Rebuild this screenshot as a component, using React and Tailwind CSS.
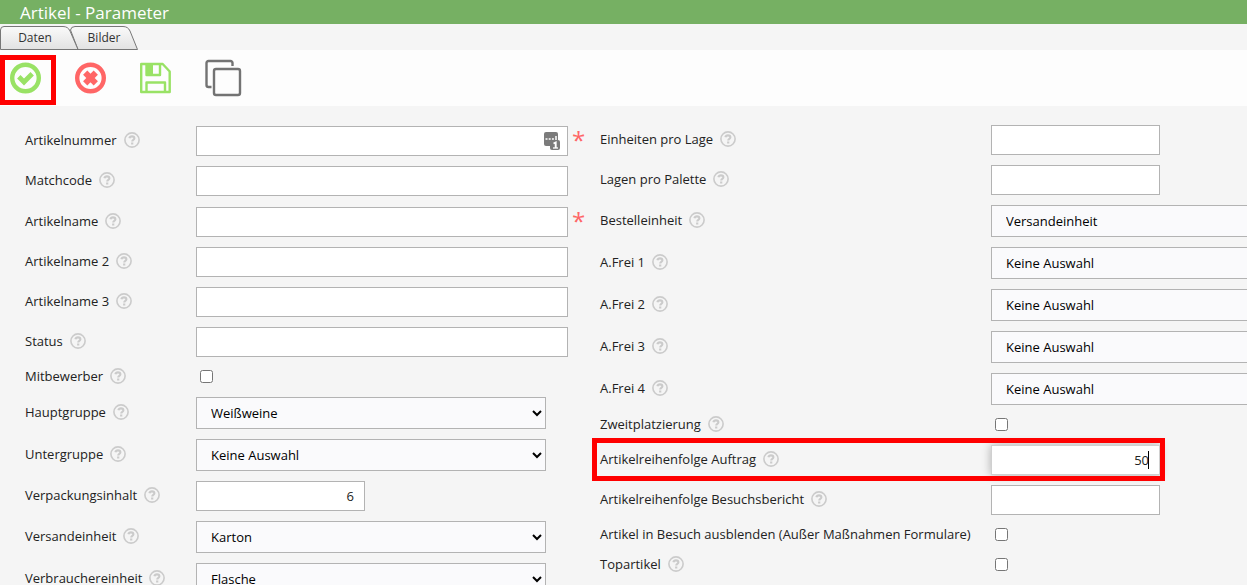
import React from 'react';

const leftFields = [
  { id: 'artikelnummer', label: 'Artikelnummer', type: 'text', required: true, badge: true },
  { id: 'matchcode', label: 'Matchcode', type: 'text' },
  { id: 'artikelname', label: 'Artikelname', type: 'text', required: true },
  { id: 'artikelname2', label: 'Artikelname 2', type: 'text' },
  { id: 'artikelname3', label: 'Artikelname 3', type: 'text' },
  { id: 'status', label: 'Status', type: 'text' },
  { id: 'mitbewerber', label: 'Mitbewerber', type: 'checkbox' },
  { id: 'hauptgruppe', label: 'Hauptgruppe', type: 'select', value: 'Weißweine' },
  { id: 'untergruppe', label: 'Untergruppe', type: 'select', value: 'Keine Auswahl' },
  { id: 'verpackungsinhalt', label: 'Verpackungsinhalt', type: 'number', value: '6' },
  { id: 'versandeinheit', label: 'Versandeinheit', type: 'select', value: 'Karton' },
  { id: 'verbrauchereinheit', label: 'Verbrauchereinheit', type: 'select', value: 'Flasche' },
];

const rightFields = [
  { id: 'einheitenLage', label: 'Einheiten pro Lage', type: 'number' },
  { id: 'lagenPalette', label: 'Lagen pro Palette', type: 'number' },
  { id: 'bestelleinheit', label: 'Bestelleinheit', type: 'select', value: 'Versandeinheit' },
  { id: 'frei1', label: 'A.Frei 1', type: 'select', value: 'Keine Auswahl' },
  { id: 'frei2', label: 'A.Frei 2', type: 'select', value: 'Keine Auswahl' },
  { id: 'frei3', label: 'A.Frei 3', type: 'select', value: 'Keine Auswahl' },
  { id: 'frei4', label: 'A.Frei 4', type: 'select', value: 'Keine Auswahl' },
  { id: 'zweitplatzierung', label: 'Zweitplatzierung', type: 'checkbox' },
  { id: 'folgeAuftrag', label: 'Artikelreihenfolge Auftrag', type: 'number', value: '50', marked: true },
  { id: 'folgeBesuch', label: 'Artikelreihenfolge Besuchsbericht', type: 'number' },
  { id: 'ausblenden', label: 'Artikel in Besuch ausblenden (Außer Maßnahmen Formulare)', type: 'checkbox', noHelp: true },
  { id: 'topartikel', label: 'Topartikel', type: 'checkbox' },
];

function HelpIcon() {
  return (
    <svg viewBox="0 0 16 16" className="w-4 h-4 shrink-0" fill="none" stroke="#cbcbcb" aria-hidden="true">
      <circle cx="8" cy="8" r="7.1" strokeWidth="1.6" />
      <path d="M5.4 6.300C5.700 5 6.700 4.400 8 4.400c1.500 0 2.400.8 2.400 1.900 0 1.600-2.200 1.400-2.200 3.100" strokeWidth="2.100" />
      <path d="M7.100 11.500h2.200" strokeWidth="2" />
    </svg>
  );
}

function Field({ field }) {
  const { id, type, value, marked, badge } = field;
  if (type === 'checkbox') {
    return <input id={id} type="checkbox" className="w-[13px] h-[13px] ml-1 mb-[2px]" />;
  }
  if (type === 'select') {
    return (
      <select
        id={id}
        defaultValue={value}
        className="w-[350px] h-8 shrink-0 pl-[10px] bg-[#fafafc] border border-[#b3b3b3] text-black"
      >
        <option>{value}</option>
      </select>
    );
  }
  if (type === 'number') {
    return (
      <div className="relative w-[169px]">
        <input
          id={id}
          type="text"
          inputMode="numeric"
          defaultValue={value}
          className={`block w-full h-[30px] px-[10px] bg-white border text-right outline-none ${
            marked ? 'border-[#d0d0d0] shadow-[0_0_10px_rgba(0,0,0,0.3)] caret-transparent' : 'border-[#b3b3b3]'
          }`}
        />
        {marked && <span className="absolute right-[11px] top-[6px] w-px h-[18px] bg-black" />}
      </div>
    );
  }
  return (
    <div className="relative w-[372px]">
      <input id={id} type="text" className="block w-full h-[30px] px-[10px] bg-white border border-[#b3b3b3] outline-none" />
      {badge && (
        <svg viewBox="0 0 17 19" className="absolute right-[7px] top-[6px] w-[17px] h-[19px]" aria-hidden="true">
          <rect x="0" y="0" width="14" height="14" rx="2" fill="#7b7b7b" />
          <path d="M1.500 7h2M4.700 7h2M7.900 7h2M12 4v4" stroke="#fff" strokeWidth="1.500" />
          <rect x="6" y="8" width="10" height="10" rx="2" fill="#7b7b7b" />
          <path d="M9.500 11.500l2.200-1V16" fill="none" stroke="#fff" strokeWidth="1.900" />
          <path d="M9 16h5" stroke="#fff" strokeWidth="1.300" />
        </svg>
      )}
    </div>
  );
}

function FieldRow({ field, labelClass }) {
  const height = field.type === 'checkbox' ? 'h-5' : field.type === 'select' ? 'h-8' : field.required ? 'h-[31px] pt-px' : 'h-[30px]';
  return (
    <div className={`relative flex items-center ${height}`}>
      <div className={`flex items-start gap-[7px] shrink-0 pb-[2px] ${labelClass}`}>
        <label htmlFor={field.id} className="whitespace-nowrap leading-4">{field.label}</label>
        {!field.noHelp && <HelpIcon />}
      </div>
      <Field field={field} />
      {field.required && <span className="self-start pl-1 pt-[2px] text-2xl leading-6 text-[#ff6666]">*</span>}
      {field.marked && (
        <div className="absolute -left-2 -top-[7px] -bottom-[6px] w-[573px] border-[5px] border-[#ff0000] pointer-events-none" />
      )}
    </div>
  );
}

function Tabs() {
  return (
    <nav className="relative flex h-[26px] text-xs text-[#333]">
      <svg viewBox="0 0 140 26" className="absolute left-0 top-0 w-[140px] h-[26px]" aria-hidden="true">
        <defs>
          <linearGradient id="tab" x1="0" y1="0" x2="0" y2="1">
            <stop offset="0" stopColor="#fafafa" />
            <stop offset="1" stopColor="#e2e2e2" />
          </linearGradient>
        </defs>
        <path d="M70.500 6Q71 2.500 75 2.500H123Q128 2.500 130 7L137.500 25.500H78Z" fill="url(#tab)" stroke="#777" />
        <path d="M0.500 25.500V6Q0.500 2.500 4 2.500H63Q68 2.500 70 7L78 25.500Z" fill="url(#tab)" stroke="#777" />
      </svg>
      <button className="relative w-[70px] pt-[2px] h-[26px]">Daten</button>
      <button className="relative w-[68px] pt-[2px] h-[26px]">Bilder</button>
    </nav>
  );
}

function Toolbar() {
  return (
    <div className="flex items-center h-14 pl-[10px] bg-[#fdfdfd]">
      <button aria-label="Übernehmen" className="relative w-[65px] text-left">
        <svg viewBox="0 0 32 32" className="w-8 h-8" fill="none" stroke="#99e265">
          <circle cx="15.500" cy="16" r="13.300" strokeWidth="4.400" />
          <path d="M8.800 14.800l5.200 5.200 8.200-8.200" strokeWidth="4.800" />
        </svg>
        <span className="absolute -left-[10px] -top-[7px] w-14 h-[50px] border-[5px] border-[#ff0000]" />
      </button>
      <button aria-label="Abbrechen" className="w-[65px] text-left">
        <svg viewBox="0 0 32 32" className="w-8 h-8" fill="none" stroke="#ff6666">
          <circle cx="15.500" cy="16" r="13.300" strokeWidth="4.400" />
          <path d="M10.200 10.700l10.600 10.600M20.800 10.700l-10.600 10.600" strokeWidth="6" />
        </svg>
      </button>
      <button aria-label="Speichern" className="w-[65px] text-left">
        <svg viewBox="0 0 32 32" className="w-8 h-8" fill="none" stroke="#99e265" strokeWidth="2.400" strokeLinejoin="round">
          <path d="M1.200 2h21.500l7 7.500v20.500H1.200z" />
          <path d="M6.500 2v11h13.500V2M6.500 30V20.500h18.500V30" />
          <path d="M7 2h6v10H7z" fill="#99e265" stroke="none" />
        </svg>
      </button>
      <button aria-label="Kopieren">
        <svg viewBox="0 0 38 38" className="w-[38px] h-[38px]" fill="none" stroke="#737373" strokeWidth="2.400">
          <rect x="9" y="10" width="26" height="26" rx="2" />
          <path d="M27.500 7V4a2 2 0 0 0-2-2H3.500a2 2 0 0 0-2 2v22a2 2 0 0 0 2 2h3" />
        </svg>
      </button>
    </div>
  );
}

export default function App() {
  return (
    <div className="h-screen overflow-hidden bg-[#f5f5f5] font-['Open_Sans',sans-serif] text-[13px] text-[#222]">
      <header className="h-6 pl-5 bg-[#76b063]">
        <h1 className="text-[17px] leading-[26px] text-white">Artikel - Parameter</h1>
      </header>
      <Tabs />
      <Toolbar />
      <form className="flex pl-[25px] pt-[19px]">
        <div className="flex flex-col gap-[10px] w-[575px] shrink-0">
          {leftFields.map(f => <FieldRow key={f.id} field={f} labelClass="w-[171px]" />)}
        </div>
        <div className="flex flex-col gap-[10px] flex-1 min-w-0">
          {rightFields.map(f => <FieldRow key={f.id} field={f} labelClass="w-[391px]" />)}
        </div>
      </form>
    </div>
  );
}
